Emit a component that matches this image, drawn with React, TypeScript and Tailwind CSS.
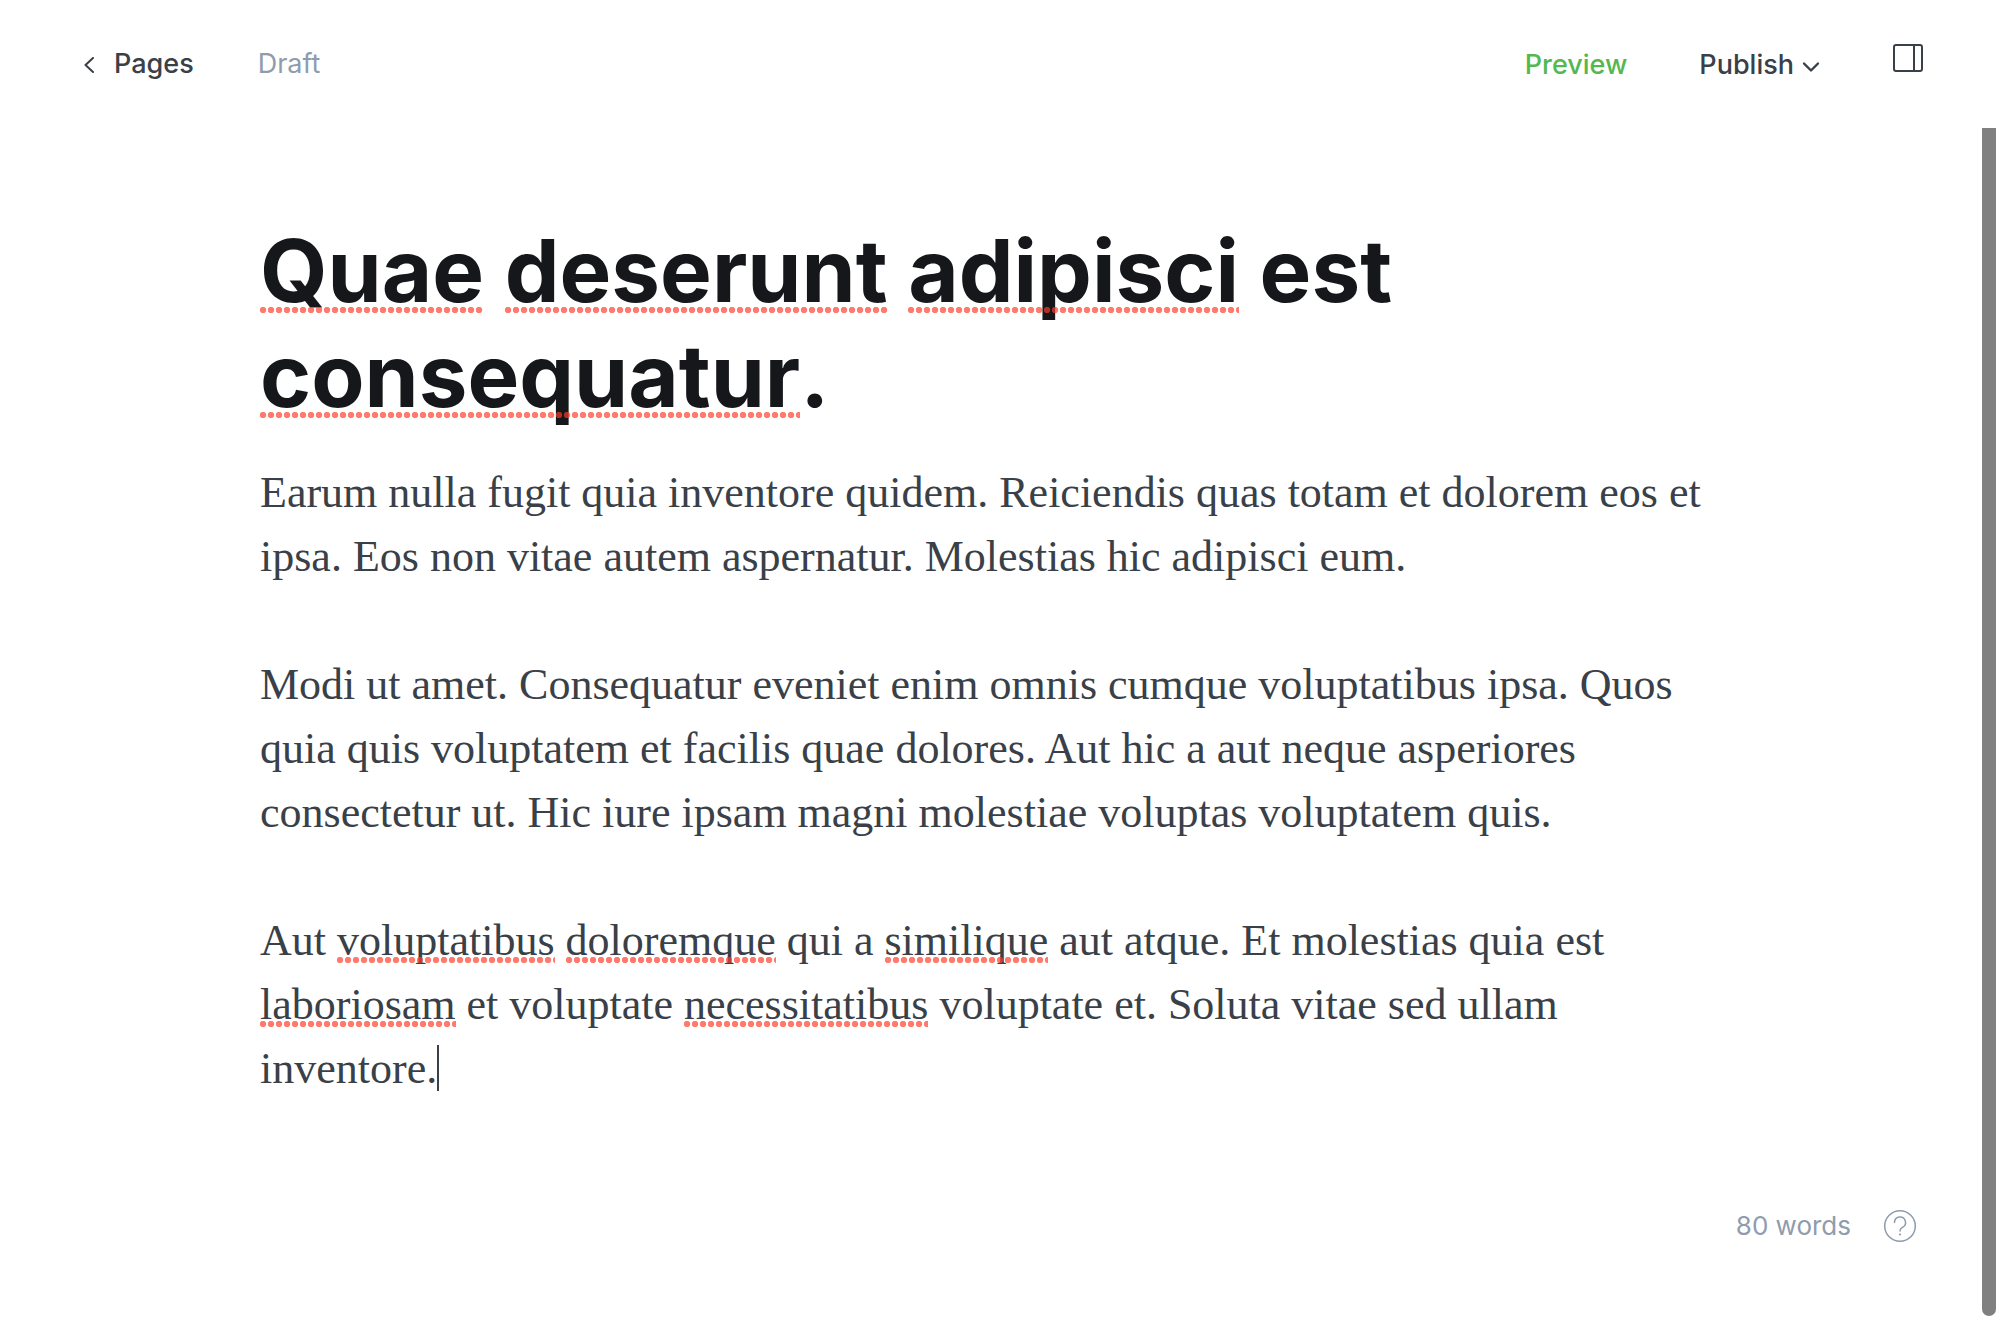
import React from "react";

function Misspelt({ children }: { children: string }) {
  return (
    <span className="relative after:pointer-events-none after:absolute after:inset-x-0 after:bottom-[var(--dots,2px)] after:h-[6px] after:bg-[radial-gradient(circle_at_3px_3px,rgba(255,59,40,0.68)_2.8px,transparent_3.6px)] after:bg-[length:8px_6px] after:bg-repeat-x">
      {children}
    </span>
  );
}

function Header() {
  return (
    <header className="flex h-32 items-center justify-between pr-[76px] pl-[84px] text-[27px] leading-8 text-[#394047]">
      <div className="flex items-center gap-16">
        <a href="#pages" className="flex items-center gap-5 font-medium">
          <svg width="10" height="16" viewBox="0 0 10 16" fill="none" stroke="currentColor" strokeWidth="2" strokeLinecap="round" strokeLinejoin="round" aria-hidden="true" className="mt-[2px]">
            <path d="M9 1 1.500 8 9 15" />
          </svg>
          Pages
        </a>
        <span className="text-[#8e9cac]">Draft</span>
      </div>
      <nav className="flex items-center gap-[72px] pt-[2px] font-medium">
        <button type="button" className="text-[#54b84f]">Preview</button>
        <button type="button" className="flex items-center gap-2">
          Publish
          <svg className="mt-1" width="18" height="12" viewBox="0 0 18 12" fill="none" stroke="currentColor" strokeWidth="2.4" strokeLinecap="round" strokeLinejoin="round" aria-hidden="true">
            <path d="M2 2.500 9 9.500l7-7" />
          </svg>
        </button>
        <button type="button" aria-label="Settings" className="mb-[14px]">
          <svg width="32" height="30" viewBox="0 0 32 30" fill="none" stroke="currentColor" strokeWidth="2" aria-hidden="true">
            <rect x="2" y="2" width="28" height="26" rx="2" />
            <path d="M22 2v26" />
          </svg>
        </button>
      </nav>
    </header>
  );
}

export default function App() {
  return (
    <div className="flex min-h-screen flex-col bg-white font-['Inter',sans-serif]">
      <Header />
      <div className="flex flex-1 pr-1 pb-1">
        <main className="flex flex-1 flex-col">
          <article className="mx-auto w-full max-w-[1498px] pt-[90px] pl-[18px]">
            <h1 className="text-[87px] leading-[105px] font-bold text-[#15171a] [--dots:10px]">
              <Misspelt>Quae</Misspelt> <Misspelt>deserunt</Misspelt> <Misspelt>adipisci</Misspelt> est{" "}
              <Misspelt>consequatur</Misspelt>.
            </h1>
            <div className="mt-[33px] flex flex-col gap-16 font-['Liberation_Serif',serif] text-[44px] leading-[64px] text-[#394047]">
              <p>
                Earum nulla fugit quia inventore quidem. Reiciendis quas totam et dolorem eos et ipsa. Eos non vitae
                autem aspernatur. Molestias hic adipisci eum.
              </p>
              <p>
                Modi ut amet. Consequatur eveniet enim omnis cumque voluptatibus ipsa. Quos quia quis voluptatem et
                facilis quae dolores. Aut hic a aut neque asperiores consectetur ut. Hic iure ipsam magni molestiae
                voluptas voluptatem quis.
              </p>
              <p>
                Aut <Misspelt>voluptatibus</Misspelt> <Misspelt>doloremque</Misspelt> qui a{" "}
                <Misspelt>similique</Misspelt> aut atque. Et molestias quia est <Misspelt>laboriosam</Misspelt> et
                voluptate <Misspelt>necessitatibus</Misspelt> voluptate et. Soluta vitae sed ullam inventore.
                <span className="inline-block h-[46px] w-[2px] bg-[#394047] align-[-8px]" />
              </p>
            </div>
          </article>
          <footer className="mt-auto flex items-center justify-end gap-8 pr-[65px] pb-[73px] text-[26px] leading-8 text-[#8e9cac]">
            <span>80 words</span>
            <button type="button" aria-label="Help">
              <svg width="34" height="34" viewBox="0 0 34 34" fill="none" stroke="currentColor" strokeWidth="1.5" strokeLinecap="round" aria-hidden="true">
                <circle cx="17" cy="17" r="15.3" />
                <path d="M11.500 13.500a5.500 5.500 0 1 1 8 4.900c-1.700.9-2.500 1.800-2.500 3.600" />
                <circle cx="17" cy="25.500" r="1.1" fill="currentColor" stroke="none" />
              </svg>
            </button>
          </footer>
        </main>
        <div className="w-[14px] rounded-b-full bg-[#808080]" />
      </div>
    </div>
  );
}
